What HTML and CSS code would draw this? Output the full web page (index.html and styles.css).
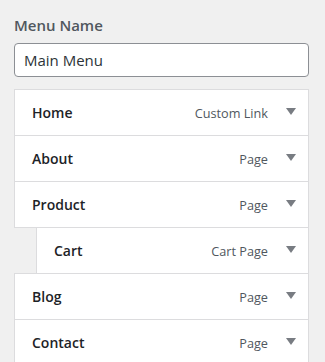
FILE: index.html
```html
<!DOCTYPE html>
<html>
<head>
<meta charset="utf-8">
<link rel="stylesheet" href="styles.css">
</head>
<body>
<div class="panel">
  <label class="field-label">Menu Name</label>
  <div class="input">Main Menu</div>
  <ul class="menu">
    <li class="item"><span class="title">Home</span><span class="type">Custom Link</span><span class="arrow"></span></li>
    <li class="item"><span class="title">About</span><span class="type">Page</span><span class="arrow"></span></li>
    <li class="item"><span class="title">Product</span><span class="type">Page</span><span class="arrow"></span></li>
    <li class="item sub"><span class="title">Cart</span><span class="type">Cart Page</span><span class="arrow"></span></li>
    <li class="item"><span class="title">Blog</span><span class="type">Page</span><span class="arrow"></span></li>
    <li class="item"><span class="title">Contact</span><span class="type">Page</span><span class="arrow"></span></li>
  </ul>
</div>
</body>
</html>
```
FILE: styles.css
```css
html, body {
  margin: 0;
  padding: 0;
  background: #f0f0f0;
  font-family: "Open Sans", "Noto Sans", sans-serif;
}
.panel {
  padding: 15px 16px 0 14px;
  display: flex;
  flex-direction: column;
}
.field-label {
  font-size: 15px;
  font-weight: 600;
  color: #50575e;
  line-height: 20px;
  height: 20px;
}
.input {
  margin-top: 8px;
  height: 32px;
  border: 1px solid #8c8f94;
  border-radius: 4px;
  background: #fff;
  font-size: 15px;
  color: #2c3338;
  line-height: 32px;
  padding: 0 9px;
}
.menu {
  list-style: none;
  margin: 12px 0 0 0;
  padding: 0;
  display: flex;
  flex-direction: column;
}
.item {
  display: flex;
  align-items: center;
  height: 45px;
  background: #fff;
  border: 1px solid #dcdcde;
  margin-top: -1px;
  padding: 0 12px 0 17px;
}
.item:first-child { margin-top: 0; }
.item.sub { margin-left: 22px; }
.title {
  flex: 1;
  font-size: 14px;
  font-weight: 600;
  color: #1d2327;
}
.type {
  font-size: 12.7px;
  color: #50575e;
}
.arrow {
  margin-left: 18px;
  width: 0;
  height: 0;
  border-left: 5px solid transparent;
  border-right: 5px solid transparent;
  border-top: 7px solid #787c82;
  margin-top: -2px;
}
```
